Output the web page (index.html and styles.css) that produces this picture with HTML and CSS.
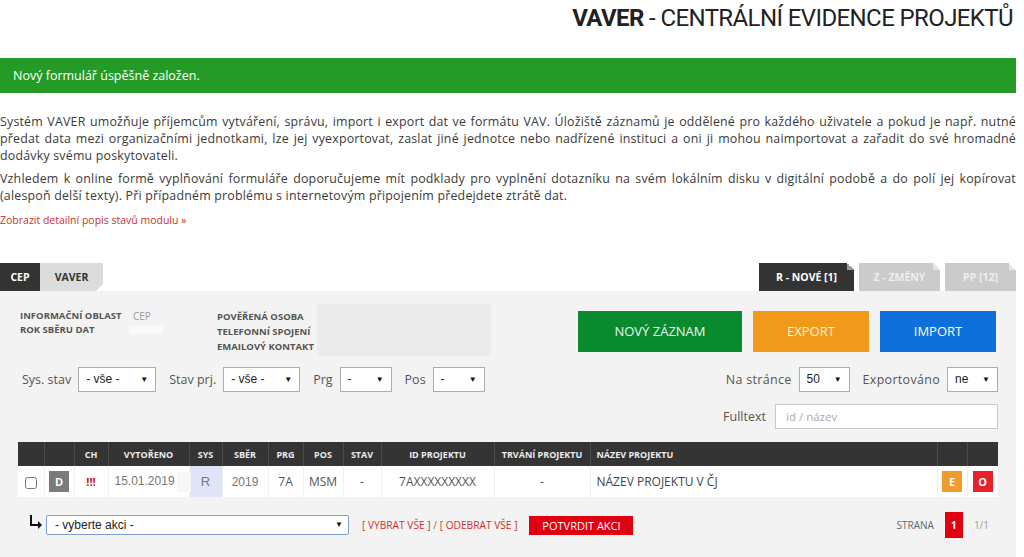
FILE: index.html
```html
<!DOCTYPE html>
<html lang="cs">

<head>
    <meta charset="UTF-8">
    <meta name="viewport" content="width=device-width, initial-scale=1.0">
    <title>VAVER - Centrální evidence projektů</title>
    <link rel="stylesheet" href="styles.css">
</head>

<body>
    <div class="page">
        <header class="top">
            <h1><strong>VAVER</strong> - CENTRÁLNÍ EVIDENCE PROJEKTŮ</h1>
        </header>

        <div class="flash">Nový formulář úspěšně založen.</div>

        <div class="intro">
            <p>Systém VAVER umožňuje příjemcům vytváření, správu, import i export dat ve formátu VAV. Úložiště záznamů je oddělené pro každého uživatele a pokud je např. nutné předat data mezi organizačními jednotkami, lze jej vyexportovat, zaslat jiné jednotce nebo nadřízené instituci a oni ji mohou naimportovat a zařadit do své hromadné dodávky svému poskytovateli.</p>
            <p>Vzhledem k online formě vyplňování formuláře doporučujeme mít podklady pro vyplnění dotazníku na svém lokálním disku v digitální podobě a do polí jej kopírovat (alespoň delší texty). Při případném problému s internetovým připojením předejdete ztrátě dat.</p>
            <a class="more" href="#">Zobrazit detailní popis stavů modulu »</a>
        </div>

        <div class="tabs">
            <div class="tabs-left">
                <a class="tab active" href="#">CEP</a>
                <a class="tab light" href="#">VAVER</a>
            </div>
            <div class="tabs-right">
                <a class="rtab active" href="#">R - NOVÉ [1]</a>
                <a class="rtab" href="#">Z - ZMĚNY</a>
                <a class="rtab" href="#">PP [12]</a>
            </div>
        </div>

        <div class="panel">
            <div class="panel-top">
                <div class="info">
                    <div class="info-left">
                        <span class="lbl">INFORMAČNÍ OBLAST</span><span class="val">CEP</span>
                        <span class="lbl">ROK SBĚRU DAT</span><span class="val"><i class="blank"></i></span>
                    </div>
                    <div class="info-right">
                        <div class="labels">
                            <span class="lbl">POVĚŘENÁ OSOBA</span>
                            <span class="lbl">TELEFONNÍ SPOJENÍ</span>
                            <span class="lbl">EMAILOVÝ KONTAKT</span>
                        </div>
                        <div class="contact-box"></div>
                    </div>
                </div>
                <div class="actions">
                    <a class="btn green" href="#">NOVÝ ZÁZNAM</a>
                    <a class="btn orange" href="#">EXPORT</a>
                    <a class="btn blue" href="#">IMPORT</a>
                </div>
            </div>

            <div class="filters">
                <div class="filter-group">
                    <label>Sys. stav</label><span class="sel w78">- vše -</span>
                    <label>Stav prj.</label><span class="sel w77">- vše -</span>
                    <label>Prg</label><span class="sel w52">-</span>
                    <label>Pos</label><span class="sel w52">-</span>
                </div>
                <div class="filter-group wide">
                    <label>Na stránce</label><span class="sel w51">50</span>
                    <label>Exportováno</label><span class="sel w51">ne</span>
                </div>
            </div>

            <div class="fulltext">
                <label>Fulltext</label><input type="text" placeholder="id / název">
            </div>

            <table class="grid">
                <colgroup>
                    <col style="width:26px"><col style="width:30px"><col style="width:34px"><col style="width:81px">
                    <col style="width:33px"><col style="width:46px"><col style="width:35px"><col style="width:40px">
                    <col style="width:38px"><col style="width:113px"><col style="width:96px"><col style="width:347px">
                    <col style="width:30px"><col style="width:31px">
                </colgroup>
                <thead>
                    <tr>
                        <th></th><th></th><th>CH</th><th>VYTOŘENO</th><th>SYS</th><th>SBĚR</th><th>PRG</th>
                        <th>POS</th><th>STAV</th><th>ID PROJEKTU</th><th>TRVÁNÍ PROJEKTU</th>
                        <th class="left">NÁZEV PROJEKTU</th><th></th><th></th>
                    </tr>
                </thead>
                <tbody>
                    <tr>
                        <td><input type="checkbox" class="chk"></td>
                        <td><span class="badge gray">D</span></td>
                        <td class="alert">!!!</td>
                        <td class="date">15.01.2019<i class="ghost"></i></td>
                        <td class="sys">R</td>
                        <td class="arial">2019</td>
                        <td>7A</td>
                        <td>MSM</td>
                        <td>-</td>
                        <td>7AXXXXXXXXX</td>
                        <td>-</td>
                        <td class="left">NÁZEV PROJEKTU V ČJ</td>
                        <td><span class="badge orange">E</span></td>
                        <td><span class="badge red">O</span></td>
                    </tr>
                </tbody>
            </table>

            <div class="bulk">
                <div class="bulk-left">
                    <svg class="turn" width="14" height="16" viewBox="0 0 14 16">
                        <path d="M2 1 V11 H10" fill="none" stroke="#111" stroke-width="2"/>
                        <path d="M9 7 L13 11 L9 15 Z" fill="#111"/>
                    </svg>
                    <span class="sel action">- vyberte akci -</span>
                    <span class="picks"><a href="#">[ VYBRAT VŠE ]</a> / <a href="#">[ ODEBRAT VŠE ]</a></span>
                    <a class="confirm" href="#">POTVRDIT AKCI</a>
                </div>
                <div class="pager">
                    <span class="pg-label">STRANA</span>
                    <span class="pg-cur">1</span>
                    <span class="pg-total">1/1</span>
                </div>
            </div>
        </div>
    </div>
</body>

</html>
```

FILE: styles.css
```css
body {
    margin: 0;
    background: #fff;
    font-family: "Open Sans", "DejaVu Sans", sans-serif;
    color: #3a3a3a;
}

a {
    text-decoration: none;
}

.page {
    width: 1016px;
}

/* header */
.top {
    height: 58px;
    display: flex;
    justify-content: flex-end;
}

.top h1 {
    margin: 4px 3px 0 0;
    font-family: Roboto, sans-serif;
    font-size: 24px;
    font-weight: 400;
    color: #222;
    letter-spacing: -0.6px;
}

.top h1 strong {
    font-weight: 700;
}

.flash {
    height: 35px;
    line-height: 35px;
    background: #249b27;
    color: #fff;
    font-size: 12.5px;
    padding-left: 13px;
}

/* intro text */
.intro {
    padding-top: 20px;
}

.intro p {
    margin: 0 0 6px;
    font-size: 12.4px;
    line-height: 17px;
    letter-spacing: 0.2px;
    text-align: justify;
}

.more {
    display: block;
    margin-top: 8px;
    font-size: 10.5px;
    line-height: 17px;
    color: #c9302c;
}

/* tabs */
.tabs {
    margin-top: 34px;
    display: flex;
    justify-content: space-between;
    align-items: flex-end;
}

.tabs-left,
.tabs-right {
    display: flex;
}

.tabs-right {
    gap: 5px;
}

.tab,
.rtab {
    height: 28px;
    line-height: 28px;
    font-size: 10.5px;
    font-weight: 700;
    text-align: center;
}

.tab.active {
    width: 40px;
    background: #333;
    color: #fff;
}

.tab.light {
    width: 63px;
    background: #dcdcdc;
    color: #333;
    clip-path: polygon(0 0, 100% 0, 100% 75%, calc(100% - 7px) 100%, 0 100%);
}

.rtab {
    position: relative;
    background: #cbcbcb;
    color: #eee;
}

.rtab:nth-child(1) {
    width: 95px;
}

.rtab:nth-child(2) {
    width: 81px;
}

.rtab:nth-child(3) {
    width: 71px;
}

.rtab.active {
    background: #333;
    color: #fff;
}

.rtab::after {
    content: "";
    position: absolute;
    top: 0;
    right: 0;
    width: 7px;
    height: 7px;
    background: linear-gradient(to bottom left, #fff 50%, #e6e6e6 50%);
}

.rtab.active::after {
    background: linear-gradient(to bottom left, #fff 50%, #9a9a9a 50%);
}

/* panel */
.panel {
    background: #f3f3f3;
    padding: 0 18px 30px;
    height: 266px;
    box-sizing: border-box;
}

.panel-top {
    display: flex;
    justify-content: space-between;
    padding: 13px 2px 0;
}

.info {
    display: flex;
}

.lbl {
    font-size: 9.5px;
    font-weight: 700;
    color: #555;
    white-space: nowrap;
}

.info-left {
    width: 197px;
    padding-top: 5px;
    display: grid;
    grid-template-columns: 113px auto;
    grid-auto-rows: 14px;
    line-height: 14px;
}

.val {
    font-size: 10px;
    color: #999;
}

.blank {
    display: inline-block;
    width: 34px;
    height: 8px;
    background: #fafafa;
    margin-left: -4px;
}

.info-right {
    display: flex;
}

.labels {
    width: 100px;
    flex-shrink: 0;
    padding-top: 5px;
    display: flex;
    flex-direction: column;
    line-height: 15px;
}

.contact-box {
    width: 174px;
    height: 52px;
    flex-shrink: 0;
    background: #ebebeb;
}

.actions {
    display: flex;
    gap: 11px;
    padding-top: 7px;
}

.btn {
    height: 41px;
    line-height: 41px;
    width: 116px;
    text-align: center;
    font-size: 13px;
    color: #fff;
}

.btn.green {
    width: 164px;
    background: #0a8a2f;
    color: #eaf6ea;
}

.btn.orange {
    background: #f1991b;
    color: #fff2d6;
}

.btn.blue {
    background: #0f6fdb;
}

/* filters */
.filters {
    margin-top: 11px;
    display: flex;
    justify-content: space-between;
    padding-left: 4px;
}

.filter-group {
    display: flex;
    align-items: center;
}

.filter-group label,
.fulltext label {
    font-size: 12.5px;
    color: #555;
    margin-right: 7px;
}

.filter-group.wide label {
    letter-spacing: 0.3px;
}

.filter-group .sel {
    margin-right: 13px;
}

.filter-group .sel:last-child {
    margin-right: 0;
}

.sel {
    position: relative;
    display: inline-block;
    box-sizing: border-box;
    height: 25px;
    line-height: 23px;
    border: 1px solid #adadad;
    background: #fff;
    padding-left: 7px;
    font-family: "Liberation Sans", Arial, sans-serif;
    font-size: 12px;
    color: #222;
}

.sel::after {
    content: "\25BC";
    position: absolute;
    right: 7px;
    top: 0;
    font-size: 8px;
    color: #111;
}

.w78 { width: 78px; }
.w77 { width: 77px; }
.w52 { width: 52px; }
.w51 { width: 51px; }

.fulltext {
    margin-top: 12px;
    display: flex;
    justify-content: flex-end;
    align-items: center;
}

.fulltext label {
    margin-right: 9px;
}

.fulltext input {
    width: 223px;
    height: 25px;
    box-sizing: border-box;
    border: 1px solid #c8c8c8;
    padding: 0 10px;
    font-family: "Open Sans", sans-serif;
    font-size: 11.5px;
    outline: none;
}

.fulltext input::placeholder {
    color: #aaa;
}

/* table */
.grid {
    margin-top: 13px;
    width: 980px;
    table-layout: fixed;
    border-collapse: collapse;
}

.grid th {
    height: 24px;
    background: #343434;
    color: #ececec;
    font-size: 9px;
    font-weight: 700;
    text-align: center;
    border-left: 1px solid #4c4c4c;
    padding: 0;
    white-space: nowrap;
}

.grid th:first-child {
    border-left: none;
}

.grid td {
    height: 31px;
    background: #fff;
    text-align: center;
    font-size: 12px;
    color: #555;
    border-left: 1px solid #efefef;
    padding: 0;
    white-space: nowrap;
}

.grid td:first-child {
    border-left: none;
}

.grid .left {
    text-align: left;
    padding-left: 6px;
}

.grid td.left {
    color: #444;
}

.chk {
    width: 12px;
    height: 12px;
    margin: 0;
    vertical-align: middle;
}

.badge {
    display: inline-block;
    width: 20px;
    height: 21px;
    line-height: 21px;
    font-size: 11px;
    font-weight: 700;
    color: #fff;
    vertical-align: middle;
}

.badge.gray {
    background: #7b7b7b;
}

.badge.orange {
    background: #f39a2c;
}

.badge.red {
    background: #e8202a;
}

.grid td.alert {
    color: #d0141d;
    font-weight: 700;
    font-size: 11px;
}

.grid td.date,
.grid td.arial {
    font-family: "Liberation Sans", Arial, sans-serif;
    font-size: 12px;
    color: #777;
}

.grid td.date {
    padding-left: 6px;
}

.ghost {
    display: inline-block;
    width: 14px;
    height: 20px;
    background: #f7f7f7;
    vertical-align: middle;
    margin-left: 2px;
}

.grid td.sys {
    background: #dfe4f8;
    font-family: "Liberation Sans", Arial, sans-serif;
    font-size: 13px;
    color: #777;
}

/* bulk actions */
.bulk {
    margin-top: 15px;
    height: 26px;
    display: flex;
    justify-content: space-between;
    align-items: center;
}

.bulk-left {
    display: flex;
    align-items: center;
}

.turn {
    margin: -6px 3px 0 11px;
}

.sel.action {
    width: 303px;
    height: 20px;
    line-height: 18px;
    border: 1px solid #7c9fd6;
    border-radius: 2px;
    padding-left: 8px;
    font-size: 12px;
}

.sel.action::after {
    right: 5px;
}

.picks {
    margin-left: 13px;
    font-size: 10.2px;
    color: #777;
}

.picks a {
    color: #d0302f;
}

.confirm {
    margin-left: 12px;
    width: 104px;
    height: 19px;
    line-height: 19px;
    text-align: center;
    background: #e1000f;
    color: #fff;
    font-size: 11px;
}

.pager {
    display: flex;
    align-items: center;
    padding-right: 9px;
}

.pg-label {
    font-size: 10px;
    color: #666;
}

.pg-cur {
    margin-left: 11px;
    width: 18px;
    height: 26px;
    line-height: 26px;
    text-align: center;
    background: #e1000f;
    color: #fff;
    font-size: 10px;
    font-weight: 700;
}

.pg-total {
    margin-left: 11px;
    font-size: 10px;
    color: #999;
}
```
